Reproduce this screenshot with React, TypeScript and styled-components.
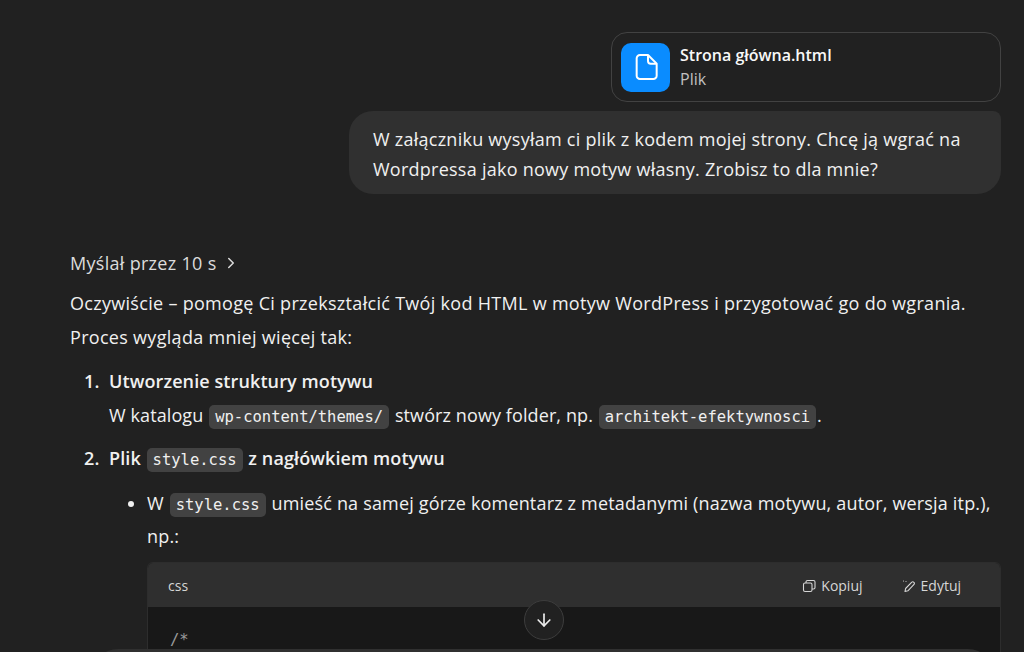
import React from "react";
import styled, { createGlobalStyle } from "styled-components";
import { ChevronRight, ArrowDown } from "lucide-react";

const Global = createGlobalStyle`
  html, body { margin: 0; padding: 0; background: #212121; height: 100%; overflow: hidden; }
  #root { height: 652px; }
`;

const Page = styled.div`
  width: 1024px;
  height: 652px;
  position: relative;
  overflow: hidden;
  background: #212121;
  color: #f0f0f0;
  font-family: "Open Sans", "Noto Sans", sans-serif;
  font-size: 18px;
  letter-spacing: 0.3px;
`;

const Column = styled.div`
  display: flex;
  flex-direction: column;
  padding: 32px 23px 0 70px;
`;

const UserBlock = styled.div`
  display: flex;
  flex-direction: column;
  align-items: flex-end;
  gap: 9px;
`;

const FileCard = styled.div`
  width: 390px;
  height: 70px;
  box-sizing: border-box;
  border: 1px solid #424242;
  border-radius: 16px;
  display: flex;
  align-items: center;
  gap: 10px;
  padding: 0 9px;
`;

const FileIcon = styled.div`
  width: 49px;
  height: 49px;
  border-radius: 10px;
  background: #0a8cff;
  display: flex;
  align-items: center;
  justify-content: center;
`;

const FileMeta = styled.div`
  display: flex;
  flex-direction: column;
`;

const FileName = styled.div`
  font-weight: 600;
  font-size: 16px;
  line-height: 24px;
  letter-spacing: 0;
  color: #f8f8f8;
`;

const FileKind = styled.div`
  font-size: 16px;
  line-height: 24px;
  letter-spacing: 0;
  color: #c0c0c0;
`;

const Bubble = styled.div`
  width: 652px;
  height: 83px;
  box-sizing: border-box;
  background: #303030;
  border-radius: 24px 8px 24px 24px;
  padding: 13px 24px;
  line-height: 30px;
  letter-spacing: 0.25px;
`;

const Thinking = styled.div`
  display: flex;
  align-items: center;
  gap: 5px;
  margin-top: 55px;
  height: 28px;
  color: #dcdcdc;
`;

const Para = styled.p`
  margin: 10px 0 0;
  line-height: 33.5px;
`;

const List = styled.ol`
  margin: 11px 0 0;
  padding: 0 0 0 39px;
`;

const Item = styled.li`
  line-height: 33.5px;
  margin-bottom: 10px;
  font-weight: 400;
  letter-spacing: 0.1px;
  &::marker {
    font-weight: 600;
    content: counter(list-item) ".  ";
  }
`;

const Strong = styled.strong`
  font-weight: 600;
  letter-spacing: 0.1px;
`;

const Code = styled.code`
  font-family: "DejaVu Sans Mono", monospace;
  font-size: 15.5px;
  line-height: 1;
  letter-spacing: 0;
  background: #424242;
  border-radius: 5px;
  padding: 3px 6px;
  margin: 0 1px;
  font-weight: 400;
`;

const Bullets = styled.ul`
  margin: 11px 0 0;
  padding: 0 0 0 38px;
  list-style-type: disc;
`;

const BulletItem = styled.li`
  letter-spacing: 0.17px;
`;

const CodeBlock = styled.div`
  margin-top: 8px;
  border-radius: 6px 6px 0 0;
  overflow: hidden;
  background: #181818;
  height: 200px;
  border: 1px solid #2d2d2d;
  border-bottom: none;
`;

const CodeBar = styled.div`
  height: 44px;
  box-sizing: border-box;
  background: #2f2f2f;
  display: flex;
  align-items: center;
  justify-content: space-between;
  padding: 3px 39px 0 20px;
  font-size: 14px;
  letter-spacing: 0;
  color: #d6d6d6;
`;

const Actions = styled.div`
  display: flex;
  gap: 39px;
`;

const Action = styled.span`
  display: inline-flex;
  align-items: center;
  gap: 5px;
`;

const CodeText = styled.pre`
  margin: 0;
  padding: 21px 22px;
  font-family: "DejaVu Sans Mono", monospace;
  font-size: 15.5px;
  line-height: 24px;
  letter-spacing: 0;
  color: #9a9a9a;
`;

const ScrollButton = styled.div`
  position: absolute;
  left: 524px;
  top: 600px;
  width: 38px;
  height: 38px;
  border-radius: 50%;
  border: 1px solid #3d3d3d;
  background: #212121;
  display: flex;
  align-items: center;
  justify-content: center;
  color: #ececec;
`;

const Composer = styled.div`
  position: absolute;
  left: 92px;
  right: 30px;
  top: 649px;
  height: 60px;
  border-radius: 26px 26px 0 0;
  background: #303030;
`;

const DocIcon = () => (
  <svg width="32" height="32" viewBox="0 0 24 24" fill="none" stroke="#fff" strokeWidth="1.5" strokeLinejoin="round">
    <path d="M5 5.5A2.5 2.5 0 0 1 7.5 3h6L20 9.5v9a2.5 2.5 0 0 1-2.5 2.5h-10A2.5 2.5 0 0 1 5 18.500z" />
    <path d="M13.500 3v4.500a2 2 0 0 0 2 2H20" />
  </svg>
);

const CopyIcon = () => (
  <svg width="14" height="14" viewBox="0 0 14 14" fill="none" stroke="#d6d6d6" strokeWidth="1.1">
    <rect x="1.500" y="4" width="8.500" height="8.500" rx="1.500" />
    <path d="M4 4V3a1.500 1.500 0 0 1 1.500-1.500h6A1.500 1.500 0 0 1 13 3v5.500A1.500 1.500 0 0 1 11.500 10H10" />
  </svg>
);

const EditIcon = () => (
  <svg width="14" height="14" viewBox="0 0 14 14" fill="none" stroke="#d6d6d6" strokeWidth="1.1" strokeLinecap="round" strokeLinejoin="round">
    <path d="M3 12.500l.6-3L9.800 3.200a1.300 1.300 0 0 1 1.900 0l.3.300a1.300 1.300 0 0 1 0 1.900L5.900 11.800z" />
    <path d="M1.500 2h.01M4 2.500h.01" />
  </svg>
);

export default function App() {
  return (
    <Page>
      <Global />
      <Column>
        <UserBlock>
          <FileCard>
            <FileIcon><DocIcon /></FileIcon>
            <FileMeta>
              <FileName>Strona główna.html</FileName>
              <FileKind>Plik</FileKind>
            </FileMeta>
          </FileCard>
          <Bubble>
            W załączniku wysyłam ci plik z kodem mojej strony. Chcę ją wgrać na Wordpressa jako nowy motyw własny. Zrobisz to dla mnie?
          </Bubble>
        </UserBlock>
        <Thinking>Myślał przez 10 s <ChevronRight size={18} /></Thinking>
        <Para>
          Oczywiście – pomogę Ci przekształcić Twój kod HTML w motyw WordPress i przygotować go do wgrania. Proces wygląda mniej więcej tak:
        </Para>
        <List>
          <Item>
            <Strong>Utworzenie struktury motywu</Strong><br />
            W katalogu <Code>wp-content/themes/</Code> stwórz nowy folder, np. <Code>architekt-efektywnosci</Code>.
          </Item>
          <Item>
            <Strong>Plik <Code>style.css</Code> z nagłówkiem motywu</Strong>
            <Bullets>
              <BulletItem>
                W <Code>style.css</Code> umieść na samej górze komentarz z metadanymi (nazwa motywu, autor, wersja itp.), np.:
                <CodeBlock>
                  <CodeBar>
                    <span>css</span>
                    <Actions>
                      <Action><CopyIcon /> Kopiuj</Action>
                      <Action><EditIcon /> Edytuj</Action>
                    </Actions>
                  </CodeBar>
                  <CodeText>/*</CodeText>
                </CodeBlock>
              </BulletItem>
            </Bullets>
          </Item>
        </List>
      </Column>
      <ScrollButton><ArrowDown size={20} /></ScrollButton>
      <Composer />
    </Page>
  );
}
